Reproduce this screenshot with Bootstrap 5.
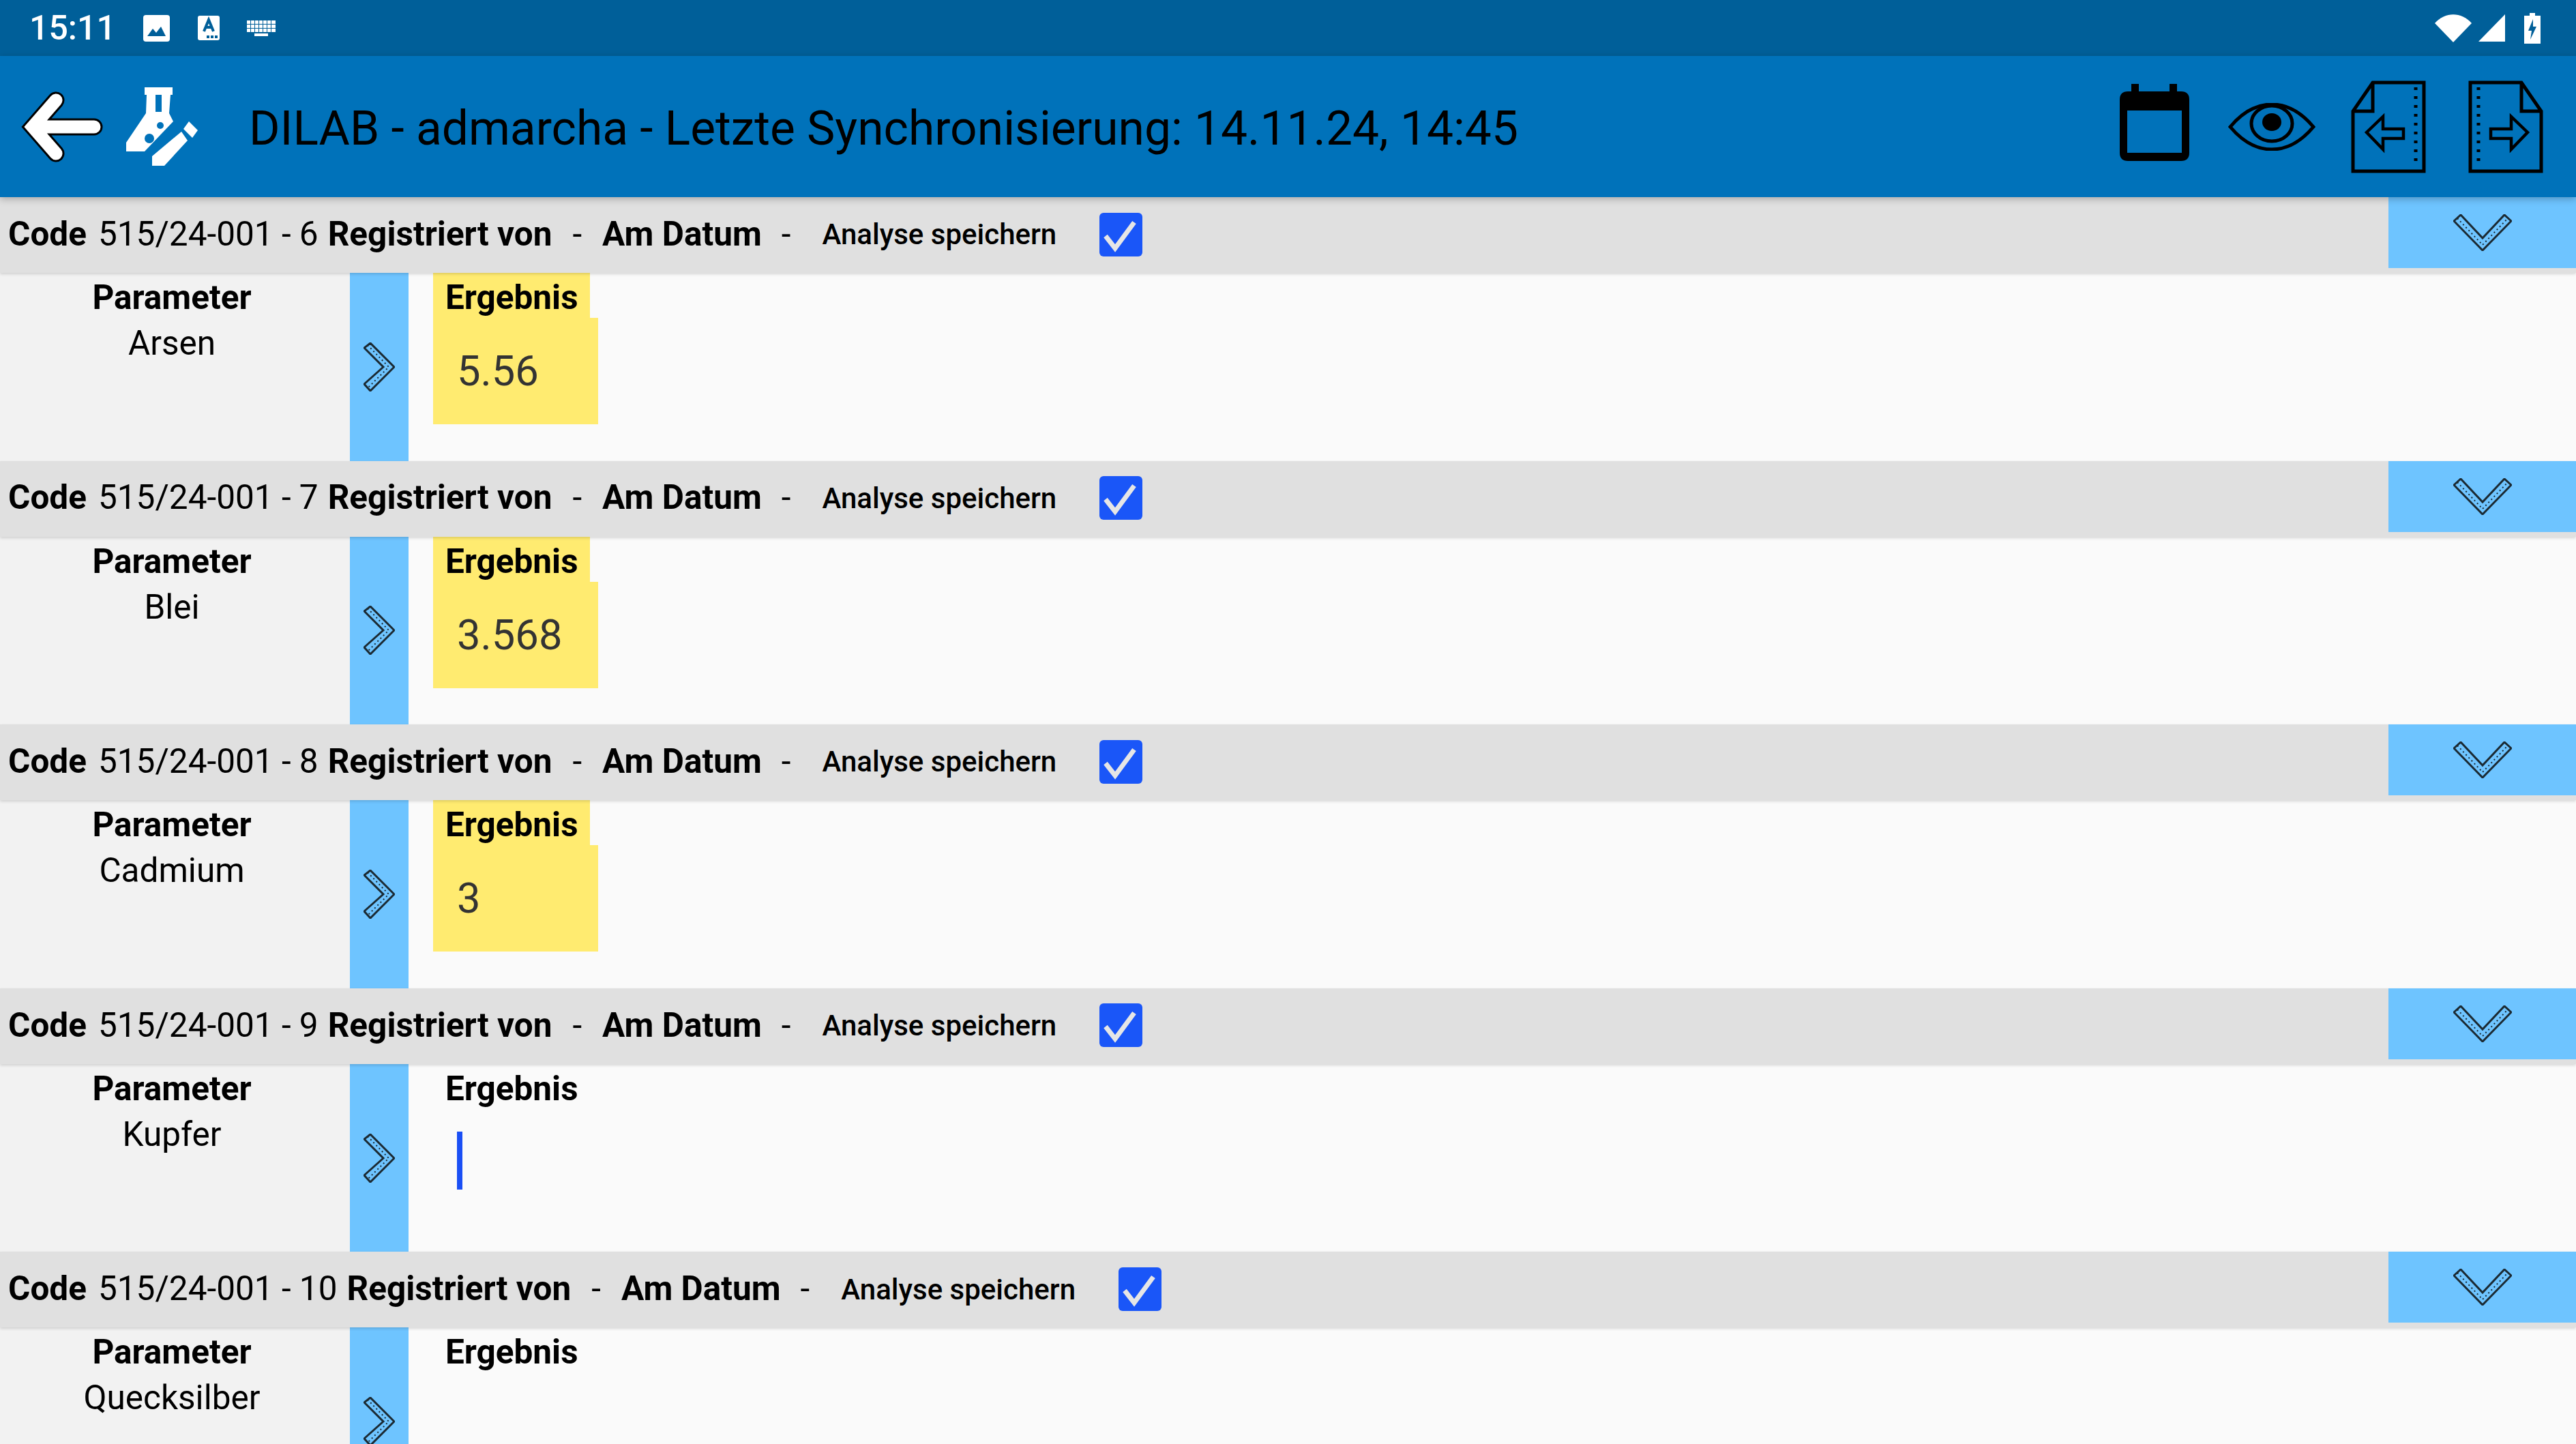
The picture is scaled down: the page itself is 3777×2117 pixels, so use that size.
<!DOCTYPE html>
<html lang="de">
<head>
<meta charset="utf-8">
<title>DILAB</title>
<link href="https://cdn.jsdelivr.net/npm/bootstrap@5.3.0/dist/css/bootstrap.min.css" rel="stylesheet">
<style>
html,body{height:100%;margin:0;overflow:hidden;background:#fafafa}
body{font-family:Roboto,"Liberation Sans",sans-serif;color:#000;font-size:49.5px;line-height:1.2}
.statusbar{height:82px;background:#005f99;color:#fff;flex:none}
.clock{font-size:50px;font-weight:500;margin-left:43px;line-height:82px;width:167px}
.toolbar{height:207px;background:#0072ba;flex:none;position:relative;z-index:3;box-shadow:0 3px 10px rgba(0,0,0,.25)}
.apptitle{font-size:69.5px;margin-left:75px;margin-top:6px;white-space:nowrap}
.rowhead{height:111px;background:#e0e0e0;position:relative;z-index:2;box-shadow:0 2px 4px rgba(0,0,0,.14)}
.rowline{padding-left:12px;height:109px;white-space:nowrap}
.fw-m{font-weight:700}
.gap-a{margin-left:17px}.gap-b{margin-left:14px}.gap-c{margin-left:30px}.gap-d{margin-left:30px}.gap-e{margin-left:29px}
.savetext{font-size:42px;font-weight:500;margin-left:46px;margin-top:2px}
.tick{width:63px;height:64px;background:#1a56f8;border-radius:6px;margin-left:63px;flex:none}
.expander{position:absolute;right:0;top:0;width:275px;height:104px;background:#6ec4ff}
.rowbody{height:275.6px}
.paramcol{width:513px;background:#f2f2f2;padding:7px 9px 0 0;flex:none}
.paramcol p{margin:0 0 9px;line-height:58px}
.nextcol{width:86px;background:#6ec4ff;flex:none}
.resultcol{padding-left:36px;flex:1 1 auto}
.reslabel{width:230px;height:67px;padding:7px 0 0 18px;line-height:58px;font-weight:700}
.resfill{background:#ffeb70}
.resvalue{width:242px;height:156px;padding-left:35px;font-size:61.5px;color:#333;line-height:156px;margin-top:-1px}
.caret{width:8px;height:85px;background:#1a4ff5;margin:32px 0 0 35px}
svg{display:block;flex:none}
.i-img{margin-left:0}.i-a{margin-left:41px}.i-kb{margin-left:40px}
.i-wifi{margin-left:auto}.i-sig{margin-left:10px}.i-bat{margin-left:28px;margin-right:52px}
.i-back{margin-left:30px}.i-flask{margin-left:34px}
.i-cal{margin-left:auto;margin-top:-12px}.i-eye{margin-left:57px}.i-dl{margin-left:52px}.i-dr{margin-left:62px;margin-right:48px}
</style>
</head>
<body class="d-flex flex-column">
<svg width="0" height="0" style="position:absolute">
<defs>
<symbol id="chevd" viewBox="0 0 86 54"><path d="M1 10 11 1 43 35 75 1 85 10 43 53Z" fill="none" stroke="#1b2a33" stroke-width="3"/><path d="M6 6 43 45 80 6" fill="none" stroke="#1b2a33" stroke-width="2" stroke-dasharray="2 4"/></symbol>
<symbol id="chevr" viewBox="0 0 46 72"><path d="M1 61 29 36 1 8 10 1 45 36 10 71Z" fill="none" stroke="#1b2a33" stroke-width="3"/><path d="M6 4 37 36 6 67" fill="none" stroke="#1b2a33" stroke-width="2" stroke-dasharray="2 4"/></symbol>
<symbol id="doc" viewBox="0 0 110 136"><path d="M32 3H107V133H3V45ZM32 3V45H3" fill="none" stroke="#000" stroke-width="5"/><path d="M95 10V126" fill="none" stroke="#000" stroke-width="5" stroke-dasharray="4 9"/><path d="M23 76 47 53V71H77V85H47V101Z" fill="none" stroke="#000" stroke-width="4.5"/></symbol>
</defs>
</svg>

<div class="statusbar d-flex align-items-center">
  <span class="clock">15:11</span>
  <svg class="i-img" width="39" height="39" viewBox="0 0 39 39"><rect width="39" height="39" rx="4" fill="#fff"/><path d="M6 31 14 20 19 26 26 17 33 31Z" fill="#005f99"/></svg>
  <svg class="i-a" width="32" height="36" viewBox="0 0 32 36"><rect width="32" height="36" rx="3" fill="#fff"/><path d="M9 23 16 6 23 23M12 17H20" fill="none" stroke="#005f99" stroke-width="4"/><path d="M13 29h4v4h-4zM19 29h4v4h-4zM25 29h4v4h-4z" fill="#005f99"/></svg>
  <svg class="i-kb" width="42" height="23" viewBox="0 0 42 23" fill="#fff"><path d="M0 0h42v5H0zM0 6h42v5H0zM0 12h42v5H0zM11 19h20v4H11z"/><path d="M5 0h1v17H5zM11 0h1v17h-1zM17 0h1v17h-1zM23 0h1v17h-1zM29 0h1v17h-1zM35 0h1v17h-1z" fill="#005f99"/></svg>
  <svg class="i-wifi" width="54" height="41" viewBox="0 0 54 41"><path d="M0 13C15 -4 39 -4 54 13L27 41Z" fill="#fff"/></svg>
  <svg class="i-sig" width="39" height="40" viewBox="0 0 39 40"><path d="M39 0V40H0Z" fill="#fff"/></svg>
  <svg class="i-bat" width="24" height="45" viewBox="0 0 24 45"><path d="M8 0H16V4H24V45H0V4H8Z" fill="#fff"/><path d="M13 9 6 26H11L9 39 18 20H13Z" fill="#005f99"/></svg>
</div>

<div class="toolbar d-flex align-items-center">
  <svg class="i-back" width="121" height="104" viewBox="0 0 121 104"><path d="M52 13 18 52 52 91M18 52H108" fill="none" stroke="#000" stroke-width="25" stroke-linecap="round"/><path d="M52 13 18 52 52 91M18 52H108" fill="none" stroke="#fff" stroke-width="19" stroke-linecap="round"/></svg>
  <svg class="i-flask" width="105" height="116" viewBox="0 0 105 116"><path fill="#fff" fill-rule="evenodd" d="M27 0H68V11H65L63 38 69 50 27 94H0V81L29 38 30 11H27ZM43 11V36H52V11Z"/><circle cx="50" cy="56" r="5" fill="#0072ba"/><circle cx="34" cy="75" r="7" fill="#0072ba"/><path fill="#fff" d="M81 65 90 78 56 115H38V101ZM92 50 105 63 97 74 84 61Z"/></svg>
  <span class="apptitle">DILAB - admarcha - Letzte Synchronisierung: 14.11.24, 14:45</span>
  <svg class="i-cal" width="102" height="113" viewBox="0 0 102 113"><path fill="#000" fill-rule="evenodd" d="M17 0H28V11H73V0H84V11H90Q102 11 102 23V101Q102 113 90 113H12Q0 113 0 101V23Q0 11 12 11H17ZM11 39V101H91V39Z"/></svg>
  <svg class="i-eye" width="128" height="70" viewBox="0 0 128 70"><path d="M3 35C40 -9 88 -9 125 35 88 79 40 79 3 35Z" fill="none" stroke="#000" stroke-width="5"/><ellipse cx="64" cy="30" rx="30" ry="26" fill="none" stroke="#000" stroke-width="5"/><ellipse cx="64" cy="28" rx="14" ry="13" fill="#000"/></svg>
  <svg class="i-dl" width="110" height="136"><use href="#doc"/></svg>
  <svg class="i-dr" width="110" height="136" viewBox="0 0 110 136"><g transform="translate(110 0) scale(-1 1)"><use href="#doc" width="110" height="136"/></g></svg>
</div>

<main class="flex-grow-1 overflow-hidden">

<section>
  <div class="rowhead">
    <div class="rowline d-flex align-items-center">
      <span class="fw-m">Code</span><span class="gap-a">515/24-001 - 6</span><span class="fw-m gap-b">Registriert von</span><span class="gap-c">-</span><span class="fw-m gap-d">Am Datum</span><span class="gap-e">-</span><span class="savetext">Analyse speichern</span>
      <svg class="tick" viewBox="0 0 63 64"><path d="M9 34 23 52 51 14" fill="none" stroke="#e6e6e6" stroke-width="7"/></svg>
    </div>
    <div class="expander d-flex align-items-center justify-content-center"><svg width="86" height="54"><use href="#chevd"/></svg></div>
  </div>
  <div class="rowbody d-flex">
    <div class="paramcol text-center"><p class="fw-m">Parameter</p><p>Arsen</p></div>
    <div class="nextcol d-flex align-items-center justify-content-center"><svg width="46" height="72"><use href="#chevr"/></svg></div>
    <div class="resultcol"><div class="reslabel resfill">Ergebnis</div><div class="resvalue resfill">5.56</div></div>
  </div>
</section>

<section>
  <div class="rowhead">
    <div class="rowline d-flex align-items-center">
      <span class="fw-m">Code</span><span class="gap-a">515/24-001 - 7</span><span class="fw-m gap-b">Registriert von</span><span class="gap-c">-</span><span class="fw-m gap-d">Am Datum</span><span class="gap-e">-</span><span class="savetext">Analyse speichern</span>
      <svg class="tick" viewBox="0 0 63 64"><path d="M9 34 23 52 51 14" fill="none" stroke="#e6e6e6" stroke-width="7"/></svg>
    </div>
    <div class="expander d-flex align-items-center justify-content-center"><svg width="86" height="54"><use href="#chevd"/></svg></div>
  </div>
  <div class="rowbody d-flex">
    <div class="paramcol text-center"><p class="fw-m">Parameter</p><p>Blei</p></div>
    <div class="nextcol d-flex align-items-center justify-content-center"><svg width="46" height="72"><use href="#chevr"/></svg></div>
    <div class="resultcol"><div class="reslabel resfill">Ergebnis</div><div class="resvalue resfill">3.568</div></div>
  </div>
</section>

<section>
  <div class="rowhead">
    <div class="rowline d-flex align-items-center">
      <span class="fw-m">Code</span><span class="gap-a">515/24-001 - 8</span><span class="fw-m gap-b">Registriert von</span><span class="gap-c">-</span><span class="fw-m gap-d">Am Datum</span><span class="gap-e">-</span><span class="savetext">Analyse speichern</span>
      <svg class="tick" viewBox="0 0 63 64"><path d="M9 34 23 52 51 14" fill="none" stroke="#e6e6e6" stroke-width="7"/></svg>
    </div>
    <div class="expander d-flex align-items-center justify-content-center"><svg width="86" height="54"><use href="#chevd"/></svg></div>
  </div>
  <div class="rowbody d-flex">
    <div class="paramcol text-center"><p class="fw-m">Parameter</p><p>Cadmium</p></div>
    <div class="nextcol d-flex align-items-center justify-content-center"><svg width="46" height="72"><use href="#chevr"/></svg></div>
    <div class="resultcol"><div class="reslabel resfill">Ergebnis</div><div class="resvalue resfill">3</div></div>
  </div>
</section>

<section>
  <div class="rowhead">
    <div class="rowline d-flex align-items-center">
      <span class="fw-m">Code</span><span class="gap-a">515/24-001 - 9</span><span class="fw-m gap-b">Registriert von</span><span class="gap-c">-</span><span class="fw-m gap-d">Am Datum</span><span class="gap-e">-</span><span class="savetext">Analyse speichern</span>
      <svg class="tick" viewBox="0 0 63 64"><path d="M9 34 23 52 51 14" fill="none" stroke="#e6e6e6" stroke-width="7"/></svg>
    </div>
    <div class="expander d-flex align-items-center justify-content-center"><svg width="86" height="54"><use href="#chevd"/></svg></div>
  </div>
  <div class="rowbody d-flex">
    <div class="paramcol text-center"><p class="fw-m">Parameter</p><p>Kupfer</p></div>
    <div class="nextcol d-flex align-items-center justify-content-center"><svg width="46" height="72"><use href="#chevr"/></svg></div>
    <div class="resultcol"><div class="reslabel">Ergebnis</div><div class="caret"></div></div>
  </div>
</section>

<section>
  <div class="rowhead">
    <div class="rowline d-flex align-items-center">
      <span class="fw-m">Code</span><span class="gap-a">515/24-001 - 10</span><span class="fw-m gap-b">Registriert von</span><span class="gap-c">-</span><span class="fw-m gap-d">Am Datum</span><span class="gap-e">-</span><span class="savetext">Analyse speichern</span>
      <svg class="tick" viewBox="0 0 63 64"><path d="M9 34 23 52 51 14" fill="none" stroke="#e6e6e6" stroke-width="7"/></svg>
    </div>
    <div class="expander d-flex align-items-center justify-content-center"><svg width="86" height="54"><use href="#chevd"/></svg></div>
  </div>
  <div class="rowbody d-flex">
    <div class="paramcol text-center"><p class="fw-m">Parameter</p><p>Quecksilber</p></div>
    <div class="nextcol d-flex align-items-center justify-content-center"><svg width="46" height="72"><use href="#chevr"/></svg></div>
    <div class="resultcol"><div class="reslabel">Ergebnis</div></div>
  </div>
</section>

</main>
<script src="https://cdn.jsdelivr.net/npm/bootstrap@5.3.0/dist/js/bootstrap.bundle.min.js"></script>
</body>
</html>
